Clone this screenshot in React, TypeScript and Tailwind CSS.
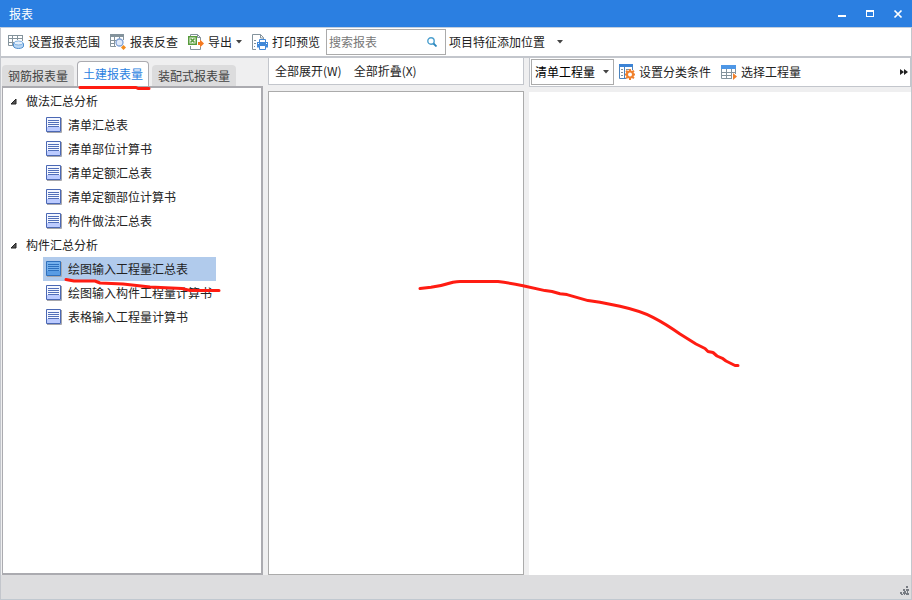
import { useState } from "react";
import type { ReactNode } from "react";

const tabs = ["钢筋报表量", "土建报表量", "装配式报表量"];

const reportTree = [
  {
    title: "做法汇总分析",
    items: ["清单汇总表", "清单部位计算书", "清单定额汇总表", "清单定额部位计算书", "构件做法汇总表"],
  },
  {
    title: "构件汇总分析",
    items: ["绘图输入工程量汇总表", "绘图输入构件工程量计算书", "表格输入工程量计算书"],
  },
];

function RangeIcon() {
  return (
    <svg width="16" height="16" viewBox="0 0 16 16" fill="none" aria-hidden="true">
      <path d="M.5 1.500h14V7M.5 1.500v10H6M4.500 1v10.500M9.500 1v5M0 4.500h15M0 8.500h6" stroke="#84939c" />
      <path d="M0 1h15v1H0z" fill="#84939c" />
      <path d="M5.500 9.500v2.500c0 3.300 10 3.300 10 0V9.500z" fill="#b9d6f3" stroke="#4f8fd0" />
      <ellipse cx="10.500" cy="9" rx="4.500" ry="2" fill="#e4effb" stroke="#7fb0e0" />
    </svg>
  );
}

function InspectIcon() {
  return (
    <svg width="16" height="16" viewBox="0 0 16 16" fill="none" aria-hidden="true">
      <path d="M0 0h14v3H0z" fill="#84939c" />
      <path d="M.5 2v10.500H6M4.500 2v10.500M9.500 2v3M13.500 2v4M0 6.500h6M0 9.500h5" stroke="#84939c" />
      <circle cx="9.500" cy="8.500" r="3.500" fill="#dfeafa" stroke="#7ea0d4" strokeWidth="1.300" />
      <path d="M13.500 11l2.500 2.500-2.500 2.500L11 13.500z" fill="#f28c1e" />
    </svg>
  );
}

function ExportIcon() {
  return (
    <svg width="16" height="16" viewBox="0 0 16 16" fill="none" aria-hidden="true">
      <path d="M2.500 2V.5h7l3 3v3M9.500.5v3h3M2.500 12v3.500h10V13" stroke="#84939c" />
      <path d="M0 2h9v9H0z" fill="#579b3c" />
      <path d="M1.500 3.500h6v6h-6z" fill="#f3f9ef" />
      <path d="M2.500 4.500l4 4M6.500 4.500l-4 4" stroke="#579b3c" strokeWidth="1.500" />
      <path d="M10 8h2V5.500L16 9.500l-4 4V11h-2z" fill="#f47920" />
    </svg>
  );
}

function PrintIcon() {
  return (
    <svg width="16" height="16" viewBox="0 0 16 16" fill="none" aria-hidden="true">
      <path d="M4 15.500H.5V.5h8l3 3V5M8.500.5v3.500h3" stroke="#84939c" />
      <path d="M2 6h2v1H2zM2 9h2v1H2zM2 12h1v1H2z" fill="#84939c" />
      <path d="M7.500 8V5.500h6V8" stroke="#4289d8" fill="#fff" />
      <path d="M5 8h11v5.500H5z" fill="#4289d8" />
      <path d="M7.500 11.500h6v4h-6z" fill="#fff" stroke="#4289d8" />
      <path d="M6 9h1v1H6zM14 9h1v1h-1z" fill="#fff" />
    </svg>
  );
}

function ClassifyIcon() {
  return (
    <svg width="16" height="16" viewBox="0 0 16 16" fill="none" aria-hidden="true">
      <path d="M0 0h14v3H0z" fill="#3c84d6" />
      <path d="M.5 2v12.500H7M5.500 3v11M13.500 2v4" stroke="#4b83bd" />
      <path d="M2 5.500h2M2 8.500h2M2 11.500h2M7 5.500h4M7 8.500h1" stroke="#84939c" />
      <path
        d="M10 5h2v1.500l1 .4 1.200-1 1.400 1.400-1 1.200.4 1h1v2h-1l-.4 1 1 1.200-1.400 1.400-1.200-1-1 .4V16h-2v-1.500l-1-.4-1.200 1-1.400-1.400 1-1.200-.4-1H6v-2h1l.4-1-1-1.200 1.400-1.400 1.200 1 1-.4z"
        fill="#f0802c"
      />
      <circle cx="11" cy="10.500" r="2" fill="#fff" />
    </svg>
  );
}

function PickIcon() {
  return (
    <svg width="16" height="16" viewBox="0 0 16 16" fill="none" aria-hidden="true">
      <path d="M0 1h15v4H0z" fill="#4e97e6" />
      <path d="M.5 5v9.500H11M5.500 5v10M10.500 5v10M14.500 5v5M0 8.500h15M0 11.500h11" stroke="#84939c" />
      <path d="M12 9l4 3.500-4 3.500z" fill="#f0802c" />
    </svg>
  );
}

function ReportIcon({ selected }: { selected: boolean }) {
  return (
    <svg width="16" height="16" viewBox="0 0 16 16" fill="none" aria-hidden="true">
      <path d="M1 15.500h14.500V1" stroke="#a7a7ac" />
      <path d="M.5.5h14v14H.5z" fill={selected ? "#75b1ed" : "#f4f7ff"} stroke={selected ? "#2f70bd" : "#4b68b4"} />
      <path d="M1 10h13v4H1z" fill={selected ? "#599ce4" : "#bccbff"} />
      <path d="M2 3.500h11M2 5.500h11M2 7.500h11M2 9.500h11" stroke={selected ? "#2d70be" : "#526fb9"} />
    </svg>
  );
}

function Caret() {
  return (
    <svg width="6" height="4" viewBox="0 0 6 4" aria-hidden="true">
      <path d="M0 0h6L3 3.500z" fill="#444" />
    </svg>
  );
}

function ToolButton({ icon, children }: { icon?: ReactNode; children: ReactNode }) {
  return (
    <button type="button" className="flex h-6 shrink-0 items-center gap-1 whitespace-nowrap rounded-sm hover:bg-blue-50">
      {icon}
      {children}
    </button>
  );
}

function TitleBar() {
  return (
    <header className="flex h-7 shrink-0 items-center justify-between border-b border-[#c3cfde] bg-[#2b7fe1] pr-[6px] pl-[9px] text-white">
      <h1>报表</h1>
      <div className="flex gap-3">
        <button type="button" aria-label="最小化" className="flex size-4 items-center justify-center">
          <svg width="10" height="10" viewBox="0 0 10 10">
            <path d="M1 6h8v2H1z" fill="#fff" />
          </svg>
        </button>
        <button type="button" aria-label="最大化" className="flex size-4 items-center justify-center">
          <svg width="10" height="10" viewBox="0 0 10 10">
            <path d="M1 1h8v7H1zM2 3v4h6V3z" fill="#fff" fillRule="evenodd" />
          </svg>
        </button>
        <button type="button" aria-label="关闭" className="flex size-4 items-center justify-center">
          <svg width="10" height="10" viewBox="0 0 10 10">
            <path d="M1.500 1.500l7 7M8.500 1.500l-7 7" stroke="#fff" strokeWidth="1.700" />
          </svg>
        </button>
      </div>
    </header>
  );
}

function MainToolbar() {
  return (
    <div className="flex h-[30px] shrink-0 items-center border-b-2 border-[#c3c6cc] bg-white pl-[7px]">
      <div className="flex shrink-0 items-center gap-[10px]">
        <ToolButton icon={<RangeIcon />}>设置报表范围</ToolButton>
        <ToolButton icon={<InspectIcon />}>报表反查</ToolButton>
        <ToolButton icon={<ExportIcon />}>
          导出
          <Caret />
        </ToolButton>
        <ToolButton icon={<PrintIcon />}>打印预览</ToolButton>
      </div>
      <label className="ml-[6px] flex h-[26px] w-[120px] shrink-0 items-center border border-[#ababab] bg-white pr-2 pl-[2px]">
        <input
          type="text"
          aria-label="搜索报表"
          placeholder="搜索报表"
          className="w-full min-w-0 flex-1 outline-none placeholder:text-[#777]"
        />
        <svg width="10" height="10" viewBox="0 0 10 10" fill="none" aria-hidden="true">
          <circle cx="4" cy="4" r="3.200" stroke="#4da0cf" strokeWidth="1.400" />
          <path d="M6.500 6.500L9.500 9.500" stroke="#2b86bd" strokeWidth="1.800" />
        </svg>
      </label>
      <button type="button" className="ml-[3px] flex h-6 shrink-0 items-center gap-3 whitespace-nowrap">
        项目特征添加位置
        <Caret />
      </button>
    </div>
  );
}

function ReportSidebar() {
  const [activeTab, setActiveTab] = useState("土建报表量");
  const [selected, setSelected] = useState("绘图输入工程量汇总表");

  return (
    <aside className="flex w-[262px] shrink-0 flex-col pl-px">
      <div role="tablist" className="flex h-7 shrink-0 items-end gap-[3px]">
        {tabs.map((tab) => (
          <button
            key={tab}
            type="button"
            role="tab"
            aria-selected={tab === activeTab}
            onClick={() => setActiveTab(tab)}
            className={
              tab === activeTab
                ? "h-[25px] whitespace-nowrap rounded-t-sm border border-b-0 border-[#ababb0] bg-white px-[5px] text-[#2b7fe1]"
                : "h-[21px] whitespace-nowrap rounded-t-sm bg-[#dcdcdd] px-[6px] text-[#444]"
            }
          >
            {tab}
          </button>
        ))}
      </div>
      <nav className="flex-1 overflow-auto border-2 border-l border-[#ababb0] bg-white pt-px">
        {reportTree.map((group) => (
          <section key={group.title}>
            <h2 className="flex h-6 items-center gap-[9px] pl-[7px]">
              <svg width="7" height="7" viewBox="0 0 7 7" aria-hidden="true">
                <path d="M6 1v5H1z" fill="#555" stroke="#222" />
              </svg>
              {group.title}
            </h2>
            <ul className="pl-10">
              {group.items.map((item) => (
                <li key={item}>
                  <button
                    type="button"
                    onClick={() => setSelected(item)}
                    className={
                      item === selected
                        ? "flex h-6 w-[173px] items-center gap-[6px] whitespace-nowrap bg-[#b1cbec] pl-[3px]"
                        : "flex h-6 w-[173px] items-center gap-[6px] whitespace-nowrap pl-[3px]"
                    }
                  >
                    <ReportIcon selected={item === selected} />
                    {item}
                  </button>
                </li>
              ))}
            </ul>
          </section>
        ))}
      </nav>
    </aside>
  );
}

function OutlinePane() {
  return (
    <section className="flex w-64 shrink-0 flex-col gap-[6px]">
      <div className="flex h-[27px] shrink-0 items-center gap-3 border border-t-0 border-[#c3c6cc] bg-white px-[6px]">
        <ToolButton>全部展开(W)</ToolButton>
        <ToolButton>全部折叠(X)</ToolButton>
      </div>
      <div className="flex-1 border border-[#ababab] bg-white" />
    </section>
  );
}

function ReportPane() {
  return (
    <section className="flex min-w-0 flex-1 flex-col gap-[5px]">
      <div className="flex h-[29px] shrink-0 items-center border border-t-0 border-[#c3c6cc] bg-white pr-[2px] pl-px">
        <div className="relative shrink-0">
          <select
            aria-label="工程量类型"
            className="h-[26px] w-[83px] appearance-none border border-[#ababab] bg-white pl-[3px] text-black outline-none"
          >
            <option>清单工程量</option>
          </select>
          <span className="pointer-events-none absolute inset-y-0 right-[5px] flex items-center">
            <Caret />
          </span>
        </div>
        <div className="ml-[5px] flex flex-1 items-center gap-[10px]">
          <ToolButton icon={<ClassifyIcon />}>设置分类条件</ToolButton>
          <ToolButton icon={<PickIcon />}>选择工程量</ToolButton>
        </div>
        <button type="button" aria-label="更多">
          <svg width="8" height="6" viewBox="0 0 8 6">
            <path d="M0 0l4 3-4 3zM4 0l4 3-4 3z" fill="#222" />
          </svg>
        </button>
      </div>
      <div className="flex-1 bg-white" />
    </section>
  );
}

function StatusBar() {
  return (
    <footer className="flex h-[25px] shrink-0 items-end justify-end border-b border-[#c0c8d0] bg-[#dddddf] pr-[2px] pb-[3px]">
      <svg width="10" height="10" viewBox="0 0 10 10" aria-hidden="true">
        <path
          d="M7 0h2v2H7zM4 3h2v2H4zM7 3h3v2H7zM5 5h2v1H5zM8 5h1v2H8zM1 6h2v2H1zM4 6h3v2H4zM7 7h3v2H7zM2 8h2v1H2zM5 8h1v1H5z"
          fill="#777b82"
        />
      </svg>
    </footer>
  );
}

function MarkerStrokes() {
  return (
    <svg
      className="pointer-events-none absolute top-0 left-0"
      width="912"
      height="600"
      viewBox="0 0 912 600"
      fill="none"
      stroke="#ff1c12"
      strokeWidth="3"
      strokeLinecap="round"
      strokeLinejoin="round"
      aria-hidden="true"
    >
      <path d="M80 87.500H136L138 88.500H149" />
      <path d="M66 279.500L74 281H95L100 283L123 284L150 287L182 288.500L190 290.500H219" />
      <path d="M420 288.600L431 287.300Q443 285.500 453 282.300Q457 281.500 460 281.500H498Q510 283 523 285.800L545 290.600L552 291.500L560 293.700L567 294.600L588 300.600L600 302.300L620 306.300Q640 310.800 653 317.300Q666 324 680 334L696 344L705 348.500L708 351.500L713 352.500L717 356L723 358.700L726 361L730 363L735 365.500H738" />
    </svg>
  );
}

export default function App() {
  return (
    <div className="relative flex h-screen flex-col overflow-hidden bg-[#efeff0] font-['Noto_Sans_CJK_SC',sans-serif] text-[12px] leading-4 text-[#222]">
      <TitleBar />
      <div className="flex min-h-0 flex-1 flex-col border-x border-[#c3c6cc]">
        <MainToolbar />
        <main className="flex min-h-0 flex-1 gap-[5px]">
          <ReportSidebar />
          <OutlinePane />
          <ReportPane />
        </main>
        <StatusBar />
      </div>
      <MarkerStrokes />
    </div>
  );
}
